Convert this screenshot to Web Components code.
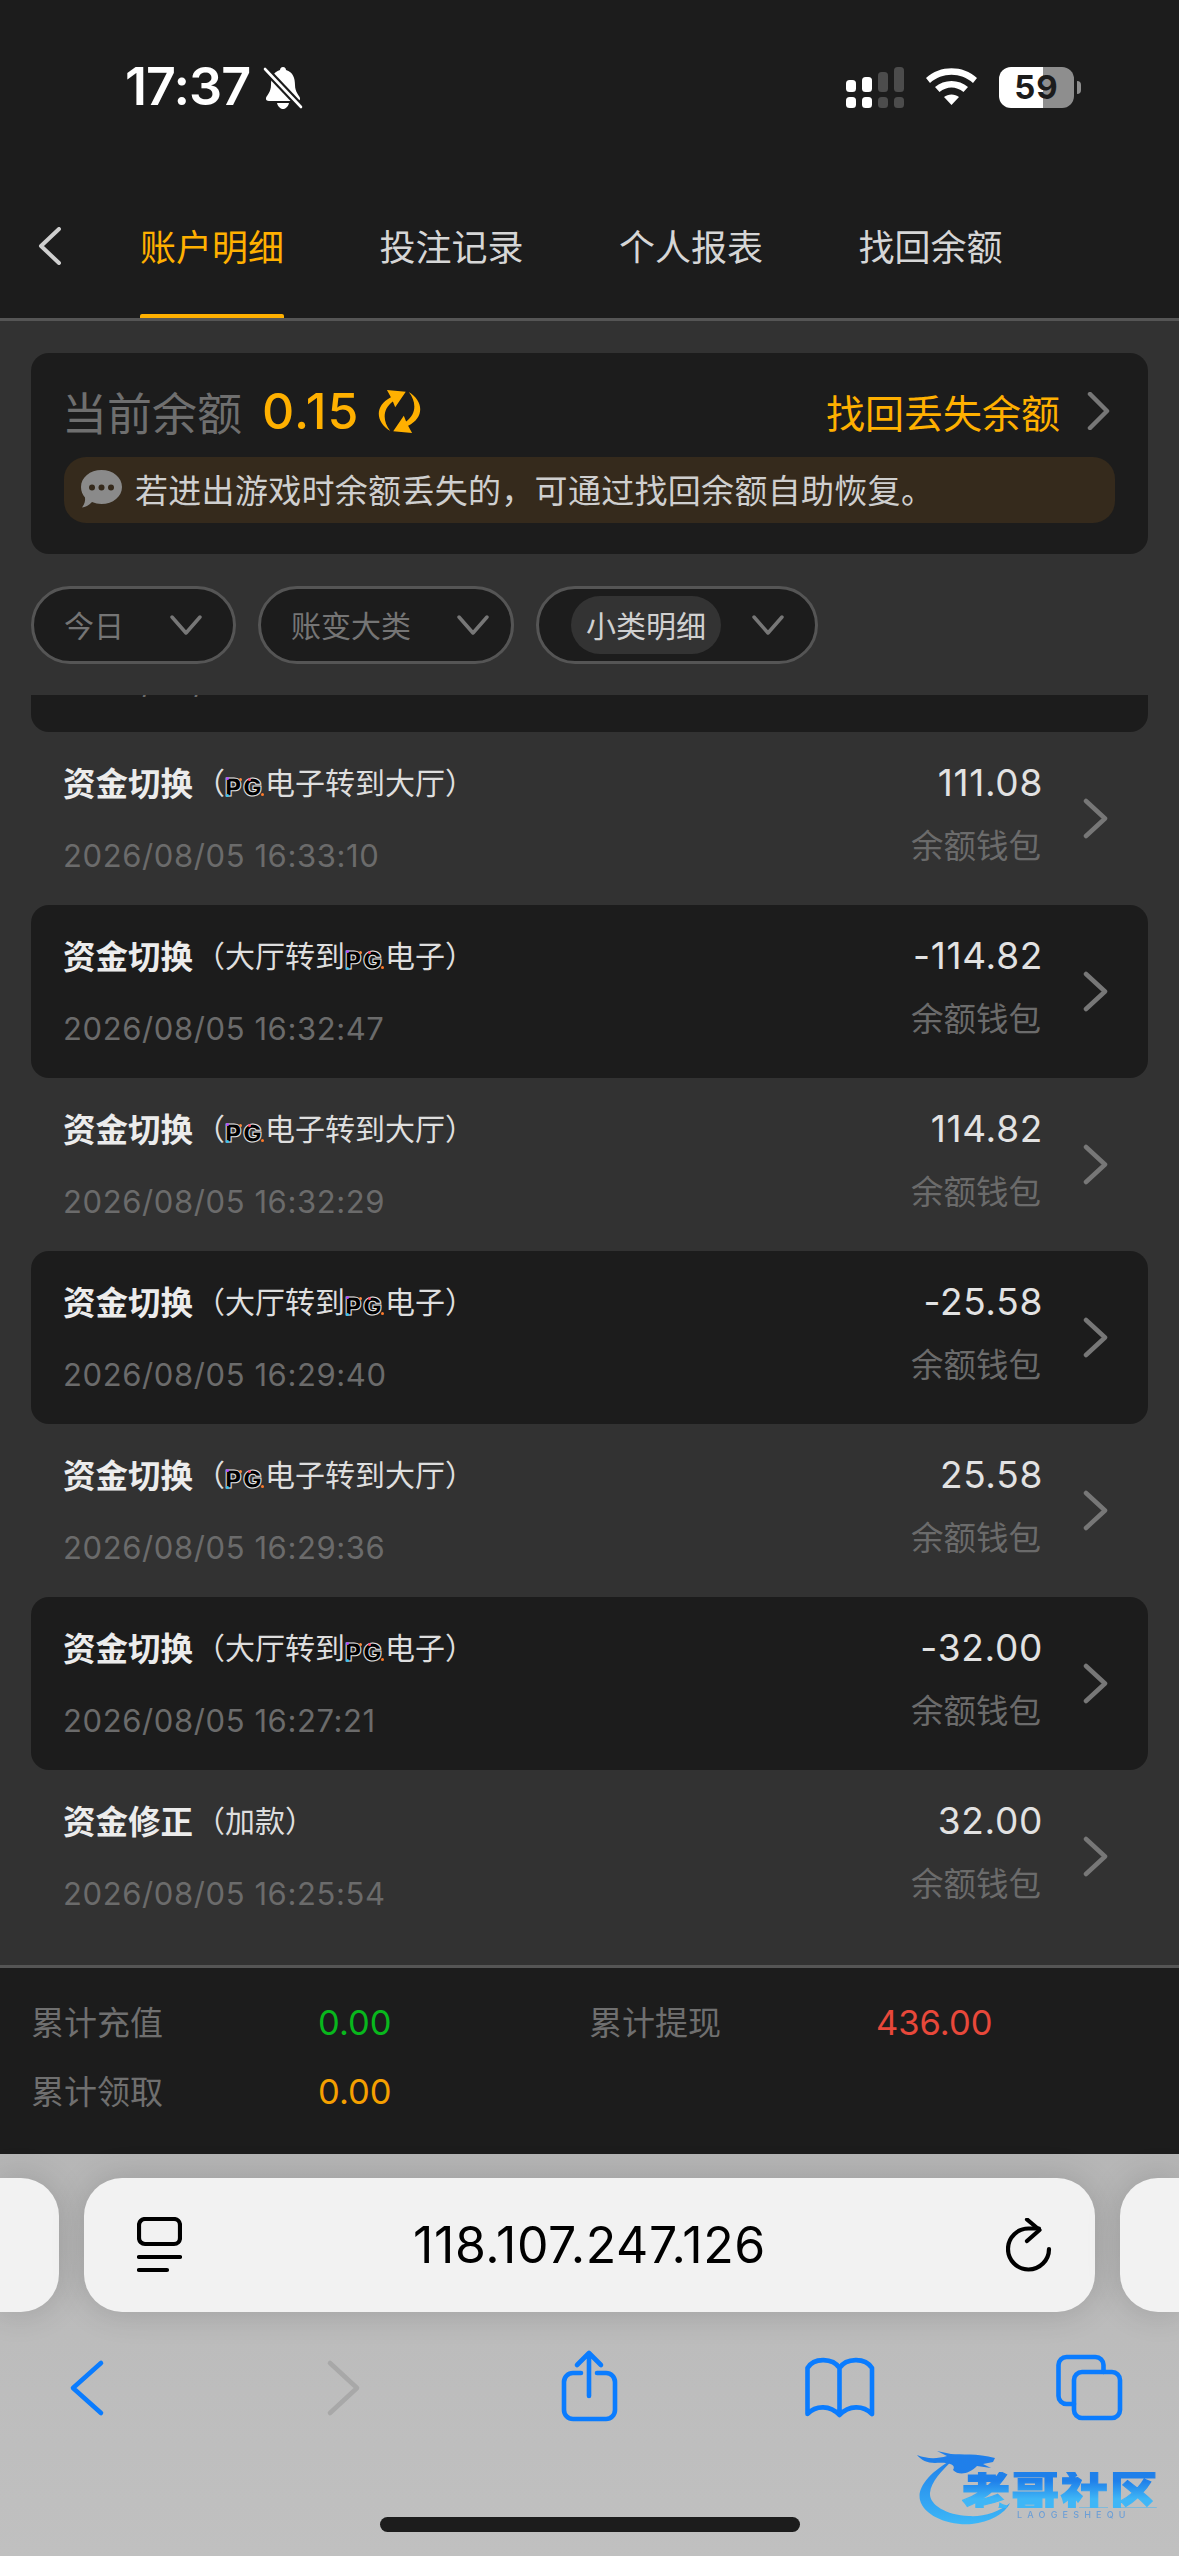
<!DOCTYPE html>
<html lang="zh">
<head>
<meta charset="utf-8">
<title>账户明细</title>
<style>
    html, body { margin: 0; padding: 0; background: #323232; }
    body { font-family: "Inter", "Noto Sans CJK SC", sans-serif; width: 1179px; height: 2556px; overflow: hidden; }
    .page { display: flex; flex-direction: column; height: 2556px; }
    .paren { margin-left: 2px; font-family: "Noto Sans CJK SC", sans-serif; font-size: 30px; font-weight: 400; color: #dedede; }
</style>
</head>
<body>
<div class="page">
    <status-bar></status-bar>
    <nav-tabs>
        <nav-tab active>账户明细</nav-tab>
        <nav-tab>投注记录</nav-tab>
        <nav-tab>个人报表</nav-tab>
        <nav-tab>找回余额</nav-tab>
    </nav-tabs>
    <balance-card></balance-card>
    <filter-row>
        <filter-pill style="padding-right: 31px">今日</filter-pill>
        <filter-pill style="padding-right: 22px">账变大类</filter-pill>
        <filter-pill selected style="padding-right: 31px">小类明细</filter-pill>
    </filter-row>
    <record-list>
        <record-row dark time="2026/08/05 16:33:15"></record-row>
        <record-row amount="111.08" time="2026/08/05 16:33:10">资金切换<span class="paren" slot="note">&#xFF08;<pg-logo></pg-logo>电子转到大厅&#xFF09;</span></record-row>
        <record-row dark amount="-114.82" time="2026/08/05 16:32:47">资金切换<span class="paren" slot="note">&#xFF08;大厅转到<pg-logo></pg-logo>电子&#xFF09;</span></record-row>
        <record-row amount="114.82" time="2026/08/05 16:32:29">资金切换<span class="paren" slot="note">&#xFF08;<pg-logo></pg-logo>电子转到大厅&#xFF09;</span></record-row>
        <record-row dark amount="-25.58" time="2026/08/05 16:29:40">资金切换<span class="paren" slot="note">&#xFF08;大厅转到<pg-logo></pg-logo>电子&#xFF09;</span></record-row>
        <record-row amount="25.58" time="2026/08/05 16:29:36">资金切换<span class="paren" slot="note">&#xFF08;<pg-logo></pg-logo>电子转到大厅&#xFF09;</span></record-row>
        <record-row dark amount="-32.00" time="2026/08/05 16:27:21">资金切换<span class="paren" slot="note">&#xFF08;大厅转到<pg-logo></pg-logo>电子&#xFF09;</span></record-row>
        <record-row amount="32.00" time="2026/08/05 16:25:54">资金修正<span class="paren" slot="note">&#xFF08;加款&#xFF09;</span></record-row>
    </record-list>
    <summary-bar></summary-bar>
    <browser-bar></browser-bar>
</div>

<script>
class BaseElement extends HTMLElement {
    connectedCallback() {
        if (this.shadowRoot) return;
        this.attachShadow({ mode: 'open' });
        const template = document.createElement('template');
        template.innerHTML = this.render();
        this.shadowRoot.appendChild(template.content.cloneNode(true));
    }
}

class StatusBar extends BaseElement {
    render() {
        return `
        <style>
            :host { display: flex; align-items: center; height: 174px; padding: 0 98px 0 125px; background: #1c1c1c; color: #fff; }
            .time { font-size: 52px; font-weight: 600; letter-spacing: -0.9px; line-height: 60px; }
            .bell { margin-left: 13px; }
            .right { margin-left: auto; display: flex; align-items: center; }
            .wifi { margin-left: 22px; }
            .battery { display: flex; align-items: center; margin-left: 22px; }
            .cell { width: 75px; height: 41px; border-radius: 12px; background: linear-gradient(90deg, #fff 0 58.7%, #8e8e8e 58.7%); color: #1c1c1c; font-size: 33px; font-weight: 700; line-height: 41px; text-align: center; letter-spacing: 1px; }
            .nub { width: 4px; height: 13px; margin-left: 3px; background: #8e8e8e; border-radius: 0 6px 6px 0; }
        </style>
        <span class="time">17:37</span>
        <svg class="bell" width="40" height="43" viewBox="0 0 40 43">
            <path fill="#fff" d="M20 1C22 1 23 2.5 23 4C30 6 32 12 32 19C32 26 36 29 37 32C37.5 34 36 35 34 35H6C4 35 2.5 34 3 32C4 29 8 26 8 19C8 12 10 6 17 4C17 2.5 18 1 20 1Z"/>
            <path fill="#fff" d="M14 37H26C25 41 22 43 20 43C18 43 15 41 14 37Z"/>
            <path stroke="#1c1c1c" stroke-width="7" d="M2 3L38 41"/>
            <path stroke="#fff" stroke-width="2.6" stroke-linecap="round" d="M2 3L38 41"/>
        </svg>
        <div class="right">
            <svg width="58" height="41" viewBox="0 0 58 41">
                <g fill="#fff"><rect x="0" y="13" width="10" height="12" rx="3.5"/><rect x="16" y="10" width="10" height="15" rx="3.5"/><rect x="0" y="30" width="10" height="11" rx="3.5"/><rect x="16" y="30" width="10" height="11" rx="3.5"/></g>
                <g fill="#4c4c4c"><rect x="32" y="5" width="10" height="20" rx="3.5"/><rect x="48" y="0" width="10" height="25" rx="3.5"/><rect x="32" y="30" width="10" height="11" rx="3.5"/><rect x="48" y="30" width="10" height="11" rx="3.5"/></g>
            </svg>
            <svg class="wifi" width="51" height="38" viewBox="0 0 51 38" fill="#fff">
                <path d="M0 10C14 -3 37 -3 51 10L47 15C35 4 16 4 4 15Z"/>
                <path d="M9 19C18 11 33 11 42 19L37.5 24C30 18 21 18 13.5 24Z"/>
                <path d="M18 29C22 25.5 29 25.5 33 29L25.5 37Z"/>
            </svg>
            <div class="battery"><div class="cell">59</div><div class="nub"></div></div>
        </div>`;
    }
}

class NavTabs extends BaseElement {
    render() {
        return `
        <style>
            :host { display: flex; align-items: stretch; height: 144px; padding-left: 38px; background: #1c1c1c; border-bottom: 3px solid #555; }
            svg { align-self: center; margin-right: 79px; }
            .tabs { display: flex; gap: 95.5px; }
        </style>
        <svg width="23" height="38" viewBox="0 0 23 38" fill="none" stroke="#cfcfcf" stroke-width="4" stroke-linecap="round" stroke-linejoin="round"><path d="M21 2L3 19L21 36"/></svg>
        <div class="tabs"><slot></slot></div>`;
    }
}

class NavTab extends BaseElement {
    render() {
        return `
        <style>
            :host { position: relative; display: flex; align-items: center; box-sizing: border-box; width: 144px; padding-bottom: 3px; font-size: 36px; color: #d6d6d6; white-space: nowrap; }
            :host([active]) { color: #ffb000; }
            :host([active])::after { content: ""; position: absolute; left: 0; right: 0; bottom: 0; height: 4px; background: #ffb000; border-radius: 2px 2px 0 0; }
        </style>
        <slot></slot>`;
    }
}

class BalanceCard extends BaseElement {
    render() {
        return `
        <style>
            :host { display: block; margin: 32px 31px 0; padding: 28px 33px 31px; background: #1c1c1c; border-radius: 18px; }
            .row { display: flex; align-items: center; height: 60px; }
            .label { margin-left: -2px; font-size: 45px; color: #6f6f6f; }
            .value { margin-left: 20px; font-size: 50px; font-weight: 500; color: #ffb000; letter-spacing: 1px; }
            .spin { margin-left: 18px; }
            .link { margin-left: auto; font-size: 39px; color: #ffb000; white-space: nowrap; }
            .go { margin: 0 5px 0 27px; }
            .notice { display: flex; align-items: center; box-sizing: border-box; height: 66px; margin-top: 16px; padding: 0 0 3px 17px; background: #352a1c; border-radius: 22px; color: #cfcfcf; font-size: 33px; letter-spacing: .3px; white-space: nowrap; }
            .notice svg { margin-right: 13px; }
        </style>
        <div class="row">
            <span class="label">当前余额</span>
            <span class="value">0.15</span>
            <svg class="spin" width="45" height="45" viewBox="370 60 136 136" fill="#ffb000">
                <path d="M410 187C365 160 362 110 412 85L400 63L457 68L425 115L418 98C388 120 385 155 410 187Z"/>
                <path d="M410 187C365 160 362 110 412 85L400 63L457 68L425 115L418 98C388 120 385 155 410 187Z" transform="rotate(180 438 128)"/>
            </svg>
            <span class="link">找回丢失余额</span>
            <svg class="go" width="23" height="38" viewBox="0 0 23 38" fill="none" stroke="#777" stroke-width="4.5" stroke-linecap="round" stroke-linejoin="round"><path d="M3 2L20 19L3 36"/></svg>
        </div>
        <div class="notice">
            <svg width="41" height="38" viewBox="0 0 41 38">
                <path fill="#8a8a8a" d="M20.5 0C32 0 41 7.5 41 17C41 26.5 32 34 20.5 34C17 34 14 33.3 11 32C8 35 4 37.5 1 37.5C3.5 34 4.5 31 4 27.5C1.5 24.5 0 21 0 17C0 7.5 9 0 20.5 0Z"/>
                <g fill="#352a1c"><circle cx="11" cy="17.5" r="3"/><circle cx="20.5" cy="17.5" r="3"/><circle cx="30" cy="17.5" r="3"/></g>
            </svg>
            <span>若进出游戏时余额丢失的&#xFF0C;可通过找回余额自助恢复&#x3002;</span>
        </div>`;
    }
}

class FilterRow extends BaseElement {
    render() {
        return `
        <style>
            :host { display: flex; gap: 22px; margin: 32px 31px 0; }
        </style>
        <slot></slot>`;
    }
}

class FilterPill extends BaseElement {
    render() {
        return `
        <style>
            :host { display: flex; align-items: center; box-sizing: border-box; height: 78px; padding: 0 32px 0 30px; background: #1c1c1c; border: 3px solid #555; border-radius: 39px; color: #757575; font-size: 30px; white-space: nowrap; }
            .text { padding-bottom: 3px; }
            svg { margin-left: 46px; }
            :host([selected]) { padding-left: 32px; color: #d0d0d0; }
            :host([selected]) .text { box-sizing: border-box; height: 58px; padding: 0 15px 3px; display: flex; align-items: center; background: #333; border-radius: 29px; }
            :host([selected]) svg { margin-left: 31px; }
        </style>
        <span class="text"><slot></slot></span>
        <svg width="32" height="20" viewBox="0 0 32 20" fill="none" stroke="#777" stroke-width="3.5" stroke-linecap="round" stroke-linejoin="round"><path d="M2 2L16 18L30 2"/></svg>`;
    }
}

class RecordList extends BaseElement {
    render() {
        return `
        <style>
            :host { display: block; flex: 1; min-height: 0; margin-top: 31px; overflow: hidden; }
            .scroll { margin: -136px 31px 0; }
        </style>
        <div class="scroll"><slot></slot></div>`;
    }
}

class RecordRow extends BaseElement {
    render() {
        const amount = this.getAttribute('amount') || '';
        const time = this.getAttribute('time') || '';
        return `
        <style>
            :host { display: flex; box-sizing: border-box; height: 173px; padding: 0 40px 0 32px; border-radius: 18px; }
            :host([dark]) { background: #1c1c1c; }
            .left { flex: 1; padding-top: 27px; }
            .title { height: 44px; display: flex; align-items: center; font-size: 32.5px; font-weight: 700; color: #ececec; white-space: nowrap; }
            .time { margin-top: 33px; font-size: 31px; letter-spacing: .6px; line-height: 40px; color: #6b6b6b; white-space: nowrap; }
            .right { padding-top: 29px; text-align: right; }
            .amount { margin-right: -2px; font-size: 37px; letter-spacing: .7px; line-height: 44px; color: #e2e2e2; }
            .wallet { margin-top: 20px; font-size: 32.5px; line-height: 44px; color: #6b6b6b; }
            svg { align-self: center; margin-left: 42px; flex: none; }
        </style>
        <div class="left">
            <div class="title"><slot></slot><slot name="note"></slot></div>
            <div class="time">${time}</div>
        </div>
        ${amount ? `<div class="right">
            <div class="amount">${amount}</div>
            <div class="wallet">余额钱包</div>
        </div>
        <svg width="25" height="41" viewBox="0 0 25 41" fill="none" stroke="#777" stroke-width="4.5" stroke-linecap="round" stroke-linejoin="round"><path d="M3 3L22 20.5L3 38"/></svg>` : ''}`;
    }
}

class PgLogo extends BaseElement {
    render() {
        return `
        <style>
            :host { position: relative; display: inline-block; width: 40px; height: 20px; vertical-align: -2px; font-family: "Inter", sans-serif; font-size: 25px; font-weight: 900; line-height: 20px; letter-spacing: 1.5px; color: #000; -webkit-text-stroke: 1px #e6e6e6; white-space: nowrap; }
            i { position: absolute; width: 3px; height: 3px; border-radius: 50%; }
        </style>
        PG<i style="left: 1px; top: 0; background: #b44cff"></i><i style="left: 14px; top: 1px; background: #ff8a3c"></i><i style="left: 1px; top: 17px; background: #36c4f0"></i><i style="left: 23px; top: 1px; background: #ff4c6a"></i><i style="left: 36px; top: 16px; background: #ff7a2a"></i>`;
    }
}

class SummaryBar extends BaseElement {
    render() {
        return `
        <style>
            :host { display: grid; grid-template-columns: 287px 271px 287px auto; grid-auto-rows: 40px; row-gap: 29px; align-content: start; box-sizing: border-box; height: 189px; padding: 35px 32px 0 31px; background: #1c1c1c; border-top: 3px solid #555; font-size: 33px; line-height: 40px; color: #6f6f6f; }
            .n { font-size: 34.5px; }
            .green { color: #08b81c; }
            .red { color: #e8483a; }
            .orange { color: #f5a000; }
        </style>
        <span>累计充值</span><span class="n green">0.00</span>
        <span>累计提现</span><span class="n red">436.00</span>
        <span>累计领取</span><span class="n orange">0.00</span>`;
    }
}

class BrowserBar extends BaseElement {
    render() {
        return `
        <style>
            :host { position: relative; display: block; height: 402px; background: linear-gradient(#b6b6b6, #bcbcbc 45%, #c0c0c0); }
            .urlrow { display: flex; gap: 25px; padding-top: 24px; height: 134px; }
            .side, .url { background: #f2f2f2; box-shadow: 0 0 34px rgba(0, 0, 0, .16); }
            .side { flex: 1; }
            .side:first-child { flex: none; width: 59px; border-radius: 0 38px 38px 0; }
            .side:last-child { border-radius: 38px 0 0 38px; }
            .url { flex: none; box-sizing: border-box; width: 1011px; display: grid; grid-template-columns: 1fr auto 1fr; align-items: center; padding: 0 48px; border-radius: 38px; font-size: 50px; color: #000; letter-spacing: .6px; }
            .url svg:first-child { margin-left: 5px; }
            .url svg:last-child { justify-self: end; margin-right: -5px; }
            .tools { display: grid; grid-template-columns: 257px 246px 251px 249px 80px; padding: 34px 0 0 46px; }
            .tools svg { display: block; }
            .home { width: 420px; height: 15px; margin: 91px auto 0; background: #1c1c1c; border-radius: 8px; }
        </style>
        <div class="urlrow">
            <div class="side"></div>
            <div class="url">
                <svg width="45" height="56" viewBox="0 0 45 56" fill="none" stroke="#000" stroke-width="4.2" stroke-linecap="round"><rect x="2" y="2" width="41" height="25" rx="6"/><path d="M2 40H43M2 53H30"/></svg>
                <span>118.107.247.126</span>
                <svg width="46" height="54" viewBox="0 0 46 54" fill="none" stroke="#000" stroke-width="4.2" stroke-linecap="round" stroke-linejoin="round"><path d="M43 31A20.5 20.5 0 1 1 23 10.5H33"/><path d="M21 1.5L33.5 12L21 23"/></svg>
            </div>
            <div class="side"></div>
        </div>
        <div class="tools">
            <svg width="80" height="80" viewBox="0 0 80 80" fill="none" stroke="#0a7cff" stroke-width="4.6" stroke-linecap="round" stroke-linejoin="round"><path d="M55 17L27 42L55 67"/></svg>
            <svg width="80" height="80" viewBox="0 0 80 80" fill="none" stroke="#a8a8a8" stroke-width="4.6" stroke-linecap="round" stroke-linejoin="round"><path d="M27 17L54 42L27 67"/></svg>
            <svg width="80" height="80" viewBox="0 0 80 80" fill="none" stroke="#0a7cff" stroke-width="4.6" stroke-linecap="round" stroke-linejoin="round"><path d="M32 27H24A9 9 0 0 0 15 36V64A9 9 0 0 0 24 73H57A9 9 0 0 0 66 64V36A9 9 0 0 0 57 27H48"/><path d="M40 50V7M28 19L40 7L52 19"/></svg>
            <svg width="80" height="80" viewBox="0 0 80 80" fill="none" stroke="#0a7cff" stroke-width="4.6" stroke-linecap="round" stroke-linejoin="round"><path d="M39.5 22C33 12 14 11 7.5 22V68C16 59 30 59 39.5 69C49 59 63 59 72 68V22C65 11 46 12 39.5 22ZM39.5 22V69"/></svg>
            <svg width="80" height="80" viewBox="0 0 80 80" fill="none" stroke="#0a7cff" stroke-width="4.6" stroke-linecap="round" stroke-linejoin="round"><rect x="25" y="26" width="46" height="46" rx="8"/><path d="M54.5 26V19A8 8 0 0 0 46.5 11H17.5A8 8 0 0 0 9.5 19V50A8 8 0 0 0 17.5 58H25"/></svg>
        </div>
        <div class="home"></div>
        <watermark-logo></watermark-logo>`;
    }
}

class WatermarkLogo extends BaseElement {
    render() {
        return `
        <style>
            :host { position: absolute; left: 917px; top: 296px; width: 241px; height: 76px; filter: blur(.6px); }
            svg { position: absolute; left: 0; top: 0; }
            .name { position: absolute; left: 45px; top: 22px; display: flex; justify-content: space-between; width: 196px; font-family: "Noto Sans CJK SC", sans-serif; font-size: 48px; font-weight: 900; line-height: 36px; background: linear-gradient(#1f80ea 25%, #3fb6f6 75%); -webkit-background-clip: text; background-clip: text; color: transparent; -webkit-text-stroke: 1.2px transparent; }
            .sub { position: absolute; left: 100px; top: 60px; width: 122px; font-size: 9px; font-weight: 500; letter-spacing: 5.2px; line-height: 9px; color: #6d9fd6; white-space: nowrap; }
        </style>
        <svg width="241" height="76" viewBox="0 0 241 76">
            <defs><linearGradient id="g" x1="0" y1="0" x2="0" y2="1"><stop offset="0" stop-color="#1f7fea"/><stop offset="1" stop-color="#3db7f7"/></linearGradient></defs>
            <path fill="url(#g)" d="M38 8C12 22 0 38 3 50C7 66 32 76 55 74C72 72 88 64 93 53C82 62 66 67 52 66C28 65 12 54 13 43C14 32 24 21 38 8Z"/>
            <path fill="#1f7fea" d="M0 5C10 9 20 9 30 6L20 1L34 4C44 5 60 3 78 8L76 12L66 14L74 18L60 16C52 24 42 26 36 20C40 14 30 12 18 13C10 13 4 10 0 5Z"/>
        </svg>
        <div class="name"><span>老</span><span>哥</span><span>社</span><span>区</span></div>
        <div class="sub">LAOGESHEQU</div>`;
    }
}

customElements.define('status-bar', StatusBar);
customElements.define('nav-tabs', NavTabs);
customElements.define('nav-tab', NavTab);
customElements.define('balance-card', BalanceCard);
customElements.define('filter-row', FilterRow);
customElements.define('filter-pill', FilterPill);
customElements.define('record-list', RecordList);
customElements.define('record-row', RecordRow);
customElements.define('pg-logo', PgLogo);
customElements.define('summary-bar', SummaryBar);
customElements.define('browser-bar', BrowserBar);
customElements.define('watermark-logo', WatermarkLogo);
</script>
</body>
</html>
